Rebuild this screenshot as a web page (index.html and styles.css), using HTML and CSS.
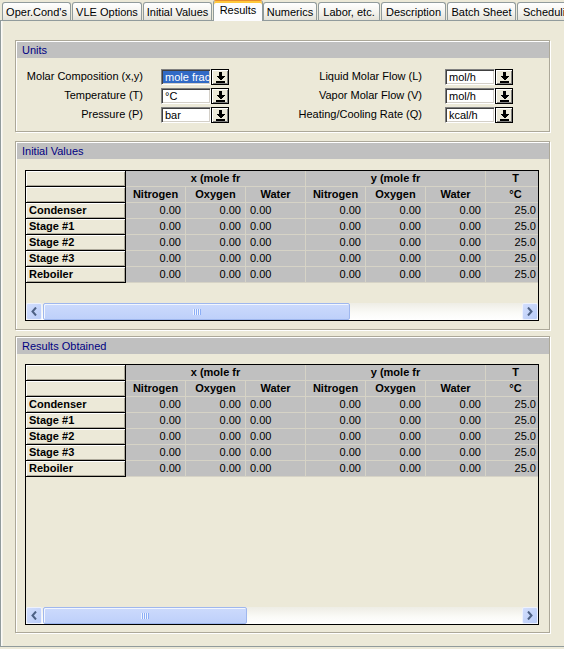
FILE: index.html
```html
<!DOCTYPE html>
<html>
<head>
<meta charset="utf-8">
<link rel="stylesheet" href="styles.css">
</head>
<body>
<div class="tabs">
  <div class="tab tab--w69">Oper.Cond's</div>
  <div class="tab tab--w70">VLE Options</div>
  <div class="tab tab--w69">Initial Values</div>
  <div class="tab tab--active">Results</div>
  <div class="tab tab--w54">Numerics</div>
  <div class="tab tab--w62">Labor, etc.</div>
  <div class="tab tab--w65">Description</div>
  <div class="tab tab--w69">Batch Sheet</div>
  <div class="tab tab--w70 tab--left">Scheduling</div>
</div>
<div class="panel">
  <section class="group group--units">
    <div class="group-title">Units</div>
    <div class="units">
      <div class="ulabel">Molar Composition (x,y)</div>
      <div class="combo"><span class="combo-field combo-field--sel">mole frac</span><span class="combo-btn"><svg width="9" height="11" viewBox="0 0 9 11"><rect x="3" y="0" width="3" height="4"/><polygon points="0,4 9,4 4.5,8.5"/><rect x="0" y="9" width="9" height="2"/></svg></span></div>
      <div class="ulabel ulabel--r">Liquid Molar Flow (L)</div>
      <div class="combo"><span class="combo-field">mol/h</span><span class="combo-btn"><svg width="9" height="11" viewBox="0 0 9 11"><rect x="3" y="0" width="3" height="4"/><polygon points="0,4 9,4 4.5,8.5"/><rect x="0" y="9" width="9" height="2"/></svg></span></div>
      <div class="ulabel">Temperature (T)</div>
      <div class="combo"><span class="combo-field">°C</span><span class="combo-btn"><svg width="9" height="11" viewBox="0 0 9 11"><rect x="3" y="0" width="3" height="4"/><polygon points="0,4 9,4 4.5,8.5"/><rect x="0" y="9" width="9" height="2"/></svg></span></div>
      <div class="ulabel ulabel--r">Vapor Molar Flow (V)</div>
      <div class="combo"><span class="combo-field">mol/h</span><span class="combo-btn"><svg width="9" height="11" viewBox="0 0 9 11"><rect x="3" y="0" width="3" height="4"/><polygon points="0,4 9,4 4.5,8.5"/><rect x="0" y="9" width="9" height="2"/></svg></span></div>
      <div class="ulabel">Pressure (P)</div>
      <div class="combo"><span class="combo-field">bar</span><span class="combo-btn"><svg width="9" height="11" viewBox="0 0 9 11"><rect x="3" y="0" width="3" height="4"/><polygon points="0,4 9,4 4.5,8.5"/><rect x="0" y="9" width="9" height="2"/></svg></span></div>
      <div class="ulabel ulabel--r">Heating/Cooling Rate (Q)</div>
      <div class="combo"><span class="combo-field">kcal/h</span><span class="combo-btn"><svg width="9" height="11" viewBox="0 0 9 11"><rect x="3" y="0" width="3" height="4"/><polygon points="0,4 9,4 4.5,8.5"/><rect x="0" y="9" width="9" height="2"/></svg></span></div>
    </div>
  </section>

  <section class="group group--init">
    <div class="group-title">Initial Values</div>
    <div class="grid grid--init">
      <div class="grid-view">
        <div class="gt">
          <div class="c c-f"></div><div class="c c-h c-span3">x (mole fr</div><div class="c c-h c-span3">y (mole fr</div><div class="c c-h">T</div>
          <div class="c c-f"></div><div class="c c-h">Nitrogen</div><div class="c c-h">Oxygen</div><div class="c c-h">Water</div><div class="c c-h">Nitrogen</div><div class="c c-h">Oxygen</div><div class="c c-h">Water</div><div class="c c-h">°C</div>
          <div class="c c-f">Condenser</div><div class="c c-n">0.00</div><div class="c c-n">0.00</div><div class="c c-l">0.00</div><div class="c c-n">0.00</div><div class="c c-n">0.00</div><div class="c c-n">0.00</div><div class="c c-n c-t">25.0</div>
          <div class="c c-f">Stage #1</div><div class="c c-n">0.00</div><div class="c c-n">0.00</div><div class="c c-l">0.00</div><div class="c c-n">0.00</div><div class="c c-n">0.00</div><div class="c c-n">0.00</div><div class="c c-n c-t">25.0</div>
          <div class="c c-f">Stage #2</div><div class="c c-n">0.00</div><div class="c c-n">0.00</div><div class="c c-l">0.00</div><div class="c c-n">0.00</div><div class="c c-n">0.00</div><div class="c c-n">0.00</div><div class="c c-n c-t">25.0</div>
          <div class="c c-f">Stage #3</div><div class="c c-n">0.00</div><div class="c c-n">0.00</div><div class="c c-l">0.00</div><div class="c c-n">0.00</div><div class="c c-n">0.00</div><div class="c c-n">0.00</div><div class="c c-n c-t">25.0</div>
          <div class="c c-f">Reboiler</div><div class="c c-n">0.00</div><div class="c c-n">0.00</div><div class="c c-l">0.00</div><div class="c c-n">0.00</div><div class="c c-n">0.00</div><div class="c c-n">0.00</div><div class="c c-n c-t">25.0</div>
        </div>
      </div>
      <div class="hscroll">
        <div class="sb-btn"><svg width="6" height="9" viewBox="0 0 6 9"><polyline points="5,0.5 1.5,4.5 5,8.5"/></svg></div>
        <div class="sb-thumb sb-thumb--init"><span class="grip"></span></div>
        <div class="sb-btn sb-btn--end"><svg width="6" height="9" viewBox="0 0 6 9"><polyline points="1,0.5 4.5,4.5 1,8.5"/></svg></div>
      </div>
    </div>
  </section>

  <section class="group group--res">
    <div class="group-title">Results Obtained</div>
    <div class="grid grid--res">
      <div class="grid-view">
        <div class="gt">
          <div class="c c-f"></div><div class="c c-h c-span3">x (mole fr</div><div class="c c-h c-span3">y (mole fr</div><div class="c c-h">T</div>
          <div class="c c-f"></div><div class="c c-h">Nitrogen</div><div class="c c-h">Oxygen</div><div class="c c-h">Water</div><div class="c c-h">Nitrogen</div><div class="c c-h">Oxygen</div><div class="c c-h">Water</div><div class="c c-h">°C</div>
          <div class="c c-f">Condenser</div><div class="c c-n">0.00</div><div class="c c-n">0.00</div><div class="c c-l">0.00</div><div class="c c-n">0.00</div><div class="c c-n">0.00</div><div class="c c-n">0.00</div><div class="c c-n c-t">25.0</div>
          <div class="c c-f">Stage #1</div><div class="c c-n">0.00</div><div class="c c-n">0.00</div><div class="c c-l">0.00</div><div class="c c-n">0.00</div><div class="c c-n">0.00</div><div class="c c-n">0.00</div><div class="c c-n c-t">25.0</div>
          <div class="c c-f">Stage #2</div><div class="c c-n">0.00</div><div class="c c-n">0.00</div><div class="c c-l">0.00</div><div class="c c-n">0.00</div><div class="c c-n">0.00</div><div class="c c-n">0.00</div><div class="c c-n c-t">25.0</div>
          <div class="c c-f">Stage #3</div><div class="c c-n">0.00</div><div class="c c-n">0.00</div><div class="c c-l">0.00</div><div class="c c-n">0.00</div><div class="c c-n">0.00</div><div class="c c-n">0.00</div><div class="c c-n c-t">25.0</div>
          <div class="c c-f">Reboiler</div><div class="c c-n">0.00</div><div class="c c-n">0.00</div><div class="c c-l">0.00</div><div class="c c-n">0.00</div><div class="c c-n">0.00</div><div class="c c-n">0.00</div><div class="c c-n c-t">25.0</div>
        </div>
      </div>
      <div class="hscroll">
        <div class="sb-btn"><svg width="6" height="9" viewBox="0 0 6 9"><polyline points="5,0.5 1.5,4.5 5,8.5"/></svg></div>
        <div class="sb-thumb sb-thumb--res"><span class="grip"></span></div>
        <div class="sb-btn sb-btn--end"><svg width="6" height="9" viewBox="0 0 6 9"><polyline points="1,0.5 4.5,4.5 1,8.5"/></svg></div>
      </div>
    </div>
  </section>
</div>
</body>
</html>
```
FILE: styles.css
```css
* { box-sizing: border-box; }
html, body { margin: 0; padding: 0; }
body {
  width: 564px;
  height: 649px;
  overflow: hidden;
  background: #ECE9D8;
  font-family: "Liberation Sans", Arial, sans-serif;
  font-size: 11px;
  color: #000;
}

/* ---------- tabs ---------- */
.tabs {
  display: flex;
  align-items: flex-end;
  height: 20px;
  padding-left: 2px;
  gap: 1px;
  white-space: nowrap;
}
.tab {
  flex: none;
  height: 18px;
  border: 1px solid #919B9C;
  border-bottom: none;
  border-radius: 3px 3px 0 0;
  background: linear-gradient(#FFFFFF, #F4F3EE 55%, #E4E2D9);
  display: flex;
  align-items: center;
  justify-content: center;
  padding-top: 1px;
  overflow: hidden;
}
.tab--w54 { width: 54px; }
.tab--w62 { width: 62px; }
.tab--w65 { width: 65px; }
.tab--w69 { width: 69px; }
.tab--w70 { width: 70px; }
.tab--left { justify-content: flex-start; padding-left: 5px; }
.tab--active {
  width: 50px;
  height: 21px;
  margin-bottom: -1px;
  margin-right: -1px;
  position: relative;
  z-index: 1;
  background: #FCFCFE;
  border-top: 1px solid #E68B2C;
  box-shadow: inset 0 2px 0 #FFC83C;
  padding-top: 0;
  padding-bottom: 3px;
}

/* ---------- panel ---------- */
.panel {
  width: 600px;
  height: 627px;
  border-top: 1px solid #919B9C;
  border-left: 1px solid #919B9C;
  border-bottom: 1px solid #919B9C;
  box-shadow: inset 1px 0 0 #FBFAF6, inset 2px 0 0 #F4F2EA;
  padding: 19px 0 0 14px;
  background: #ECE9D8;
}

/* ---------- group boxes ---------- */
.group {
  width: 535px;
  border: 1px solid #ACA899;
  padding: 1px 0 0 1px;
  box-shadow: inset 1px 1px 0 #fff, 1px 1px 0 #fff;
}
.group--init { margin-top: 9px; padding-bottom: 8px; }
.group--res { margin-top: 6px; padding-bottom: 7px; }
.group-title {
  height: 16px;
  line-height: 16px;
  background: #C0C0C0;
  color: #000080;
  padding-left: 5px;
}

/* ---------- units ---------- */
.units {
  display: grid;
  grid-template-columns: 144px 68px 216px 68px;
  grid-auto-rows: 16px;
  row-gap: 3px;
  padding: 11px 0 8px;
}
.ulabel {
  text-align: right;
  padding-right: 18px;
  line-height: 15px;
  white-space: nowrap;
}
.ulabel--r { padding-right: 23px; }
.combo { display: flex; height: 16px; }
.combo-field {
  width: 50px;
  height: 16px;
  border: 1px solid;
  border-color: #808080 #fff #fff #808080;
  box-shadow: inset 1px 1px 0 #404040, inset -1px -1px 0 #D4D0C8;
  background: #fff;
  padding-left: 3px;
  line-height: 14px;
  overflow: hidden;
  white-space: nowrap;
}
.combo-field--sel {
  background: #316AC5;
  color: #fff;
}
.combo-btn {
  width: 18px;
  height: 16px;
  border: 1px solid #000;
  box-shadow: inset 1px 1px 0 #fff, inset -1px -1px 0 #808080;
  background: #ECE9D8;
  display: flex;
  align-items: center;
  justify-content: center;
}
.combo-btn svg { display: block; fill: #000; shape-rendering: crispEdges; }

/* ---------- data grid ---------- */
.grid {
  width: 514px;
  margin-left: 8px;
  border: 1px solid #000;
  background: #ECE9D8;
  display: flex;
  flex-direction: column;
}
.group--init .grid { margin-top: 11px; height: 151px; }
.group--res .grid { margin-top: 10px; height: 261px; }
.grid-view { flex: 1; overflow: hidden; }
.gt {
  display: grid;
  grid-template-columns: 100px repeat(7, 60px);
  grid-auto-rows: 16px;
  width: 520px;
}
.c {
  background: #C0C0C0;
  border-right: 1px solid #D6D3C6;
  border-bottom: 1px solid #D6D3C6;
  padding: 0 4px;
  line-height: 15px;
  white-space: nowrap;
  overflow: hidden;
}
.c-span3 { grid-column: span 3; }
.c-h { font-weight: bold; text-align: center; }
.c-n { text-align: right; }
.c-l { text-align: left; }
.c-t { padding-right: 9px; }
.c-f {
  background: #ECE9D8;
  border-right: 1px solid #000;
  border-bottom: 1px solid #000;
  box-shadow: inset 1px 1px 0 #fff, inset -1px -1px 0 #ACA899;
  font-weight: bold;
  padding-left: 3px;
}

/* ---------- scrollbar ---------- */
.hscroll {
  flex: none;
  height: 17px;
  display: flex;
  background: linear-gradient(#EEEDE5, #FBFBF8 60%, #FFFFFF);
}
.sb-btn {
  width: 16px;
  height: 17px;
  border: 1px solid #EEF2FD;
  border-radius: 2px;
  background: linear-gradient(135deg, #D2DEFC, #B9CCF8);
  display: flex;
  align-items: center;
  justify-content: center;
}
.sb-btn--end { margin-left: auto; }
.sb-btn svg { display: block; fill: none; stroke: #4D6185; stroke-width: 2; }
.sb-thumb {
  margin-left: 1px;
  height: 17px;
  border: 1px solid #9FB7EE;
  border-radius: 2px;
  box-shadow: inset 1px 1px 0 #F2F6FE;
  background: linear-gradient(#CCDAFC, #BED0FA);
  display: flex;
  align-items: center;
  justify-content: center;
}
.sb-thumb--init { width: 307px; }
.sb-thumb--res { width: 204px; }
.grip {
  width: 8px;
  height: 6px;
  background: repeating-linear-gradient(to right, #EEF3FE 0 1px, #8CAEF6 1px 2px);
}
```
